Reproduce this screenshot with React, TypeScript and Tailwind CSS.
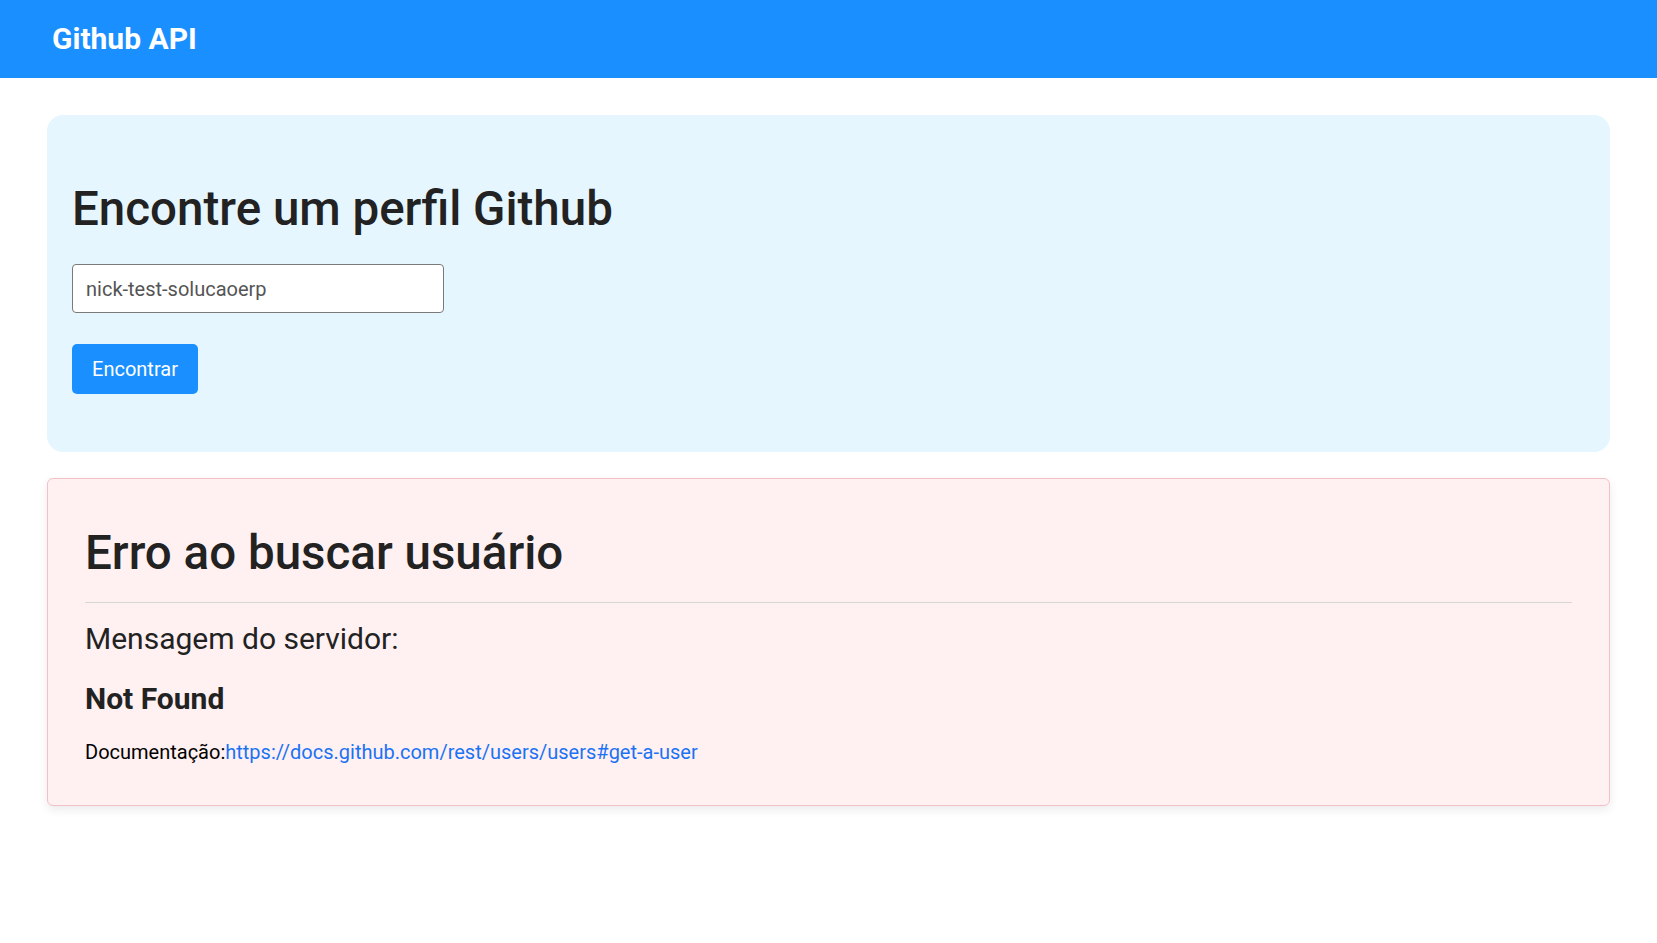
export default function App() {
  return (
    <div className="min-h-screen bg-white text-[#222] font-['Roboto',sans-serif]">
      <header className="flex h-[78px] items-center bg-[#1a8fff] px-[52px]">
        <h1 className="text-[30px] font-bold leading-none text-white">Github API</h1>
      </header>

      <main className="px-[47px] pt-[37px]">
        {/* Search */}
        <section className="rounded-[16px] bg-[#e5f6ff] px-[25px] pt-[66px] pb-[58px]">
          <h2 className="text-[47.5px] font-medium leading-[1.2]">Encontre um perfil Github</h2>
          <input
            defaultValue="nick-test-solucaoerp"
            className="mt-[26px] block h-[49px] w-[372px] rounded-[4px] border border-[#7a7a7a] bg-white px-[13px] text-[20px] text-[#555] outline-none"
          />
          <button className="mt-[31px] h-[50px] w-[126px] rounded-[5px] bg-[#1a8fff] text-[20px] text-white">
            Encontrar
          </button>
        </section>

        {/* Error */}
        <section className="mt-[26px] rounded-[6px] border border-[#f1c1c7] bg-[#fff0f1] px-[37px] pt-[46px] pb-[38px] shadow-[0_4px_10px_rgba(0,0,0,0.08)]">
          <h2 className="text-[47.5px] font-medium leading-[1.2]">Erro ao buscar usuário</h2>
          <hr className="mt-[20px] border-t border-[#d6d6d6]" />
          <p className="mt-[18px] text-[30px] leading-[1.2]">Mensagem do servidor:</p>
          <p className="mt-[24px] text-[30px] font-bold leading-[1.2]">Not Found</p>
          <p className="mt-[20px] text-[20px] leading-[1.5] text-black">
            Documentação:
            <a href="#" className="text-[#1a73f5]">https://docs.github.com/rest/users/users#get-a-user</a>
          </p>
        </section>
      </main>
    </div>
  );
}
